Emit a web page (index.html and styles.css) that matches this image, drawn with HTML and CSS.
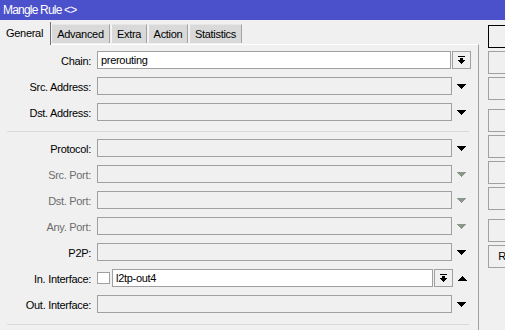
FILE: index.html
```html
<!DOCTYPE html>
<html>
<head>
<meta charset="utf-8">
<link rel="stylesheet" href="styles.css">
</head>
<body>
<div class="window">
  <div class="titlebar">Mangle Rule &lt;&gt;</div>
  <div class="content">
    <div class="main">
      <div class="tabs">
        <div class="tab active">General</div>
        <div class="tab t-adv">Advanced</div>
        <div class="tab t-extra">Extra</div>
        <div class="tab t-action">Action</div>
        <div class="tab t-stats">Statistics</div>
      </div>
      <div class="panel">
        <div class="row">
          <div class="label">Chain:</div>
          <div class="field white narrow">prerouting</div>
          <div class="ddbtn"><svg width="7" height="8" viewBox="0 0 7 8" shape-rendering="crispEdges"><rect x="0" y="0" width="7" height="1"/><rect x="2" y="2" width="3" height="2"/><rect x="0" y="4" width="7" height="1"/><rect x="1" y="5" width="5" height="1"/><rect x="2" y="6" width="3" height="1"/><rect x="3" y="7" width="1" height="1"/></svg></div>
        </div>
        <div class="row">
          <div class="label">Src. Address:</div>
          <div class="field"></div>
          <div class="arrow"><svg width="9" height="5" viewBox="0 0 9 5" shape-rendering="crispEdges"><rect x="0" y="0" width="9" height="1"/><rect x="1" y="1" width="7" height="1"/><rect x="2" y="2" width="5" height="1"/><rect x="3" y="3" width="3" height="1"/><rect x="4" y="4" width="1" height="1"/></svg></div>
        </div>
        <div class="row">
          <div class="label">Dst. Address:</div>
          <div class="field"></div>
          <div class="arrow"><svg width="9" height="5" viewBox="0 0 9 5" shape-rendering="crispEdges"><rect x="0" y="0" width="9" height="1"/><rect x="1" y="1" width="7" height="1"/><rect x="2" y="2" width="5" height="1"/><rect x="3" y="3" width="3" height="1"/><rect x="4" y="4" width="1" height="1"/></svg></div>
        </div>
        <div class="sep"></div>
        <div class="row">
          <div class="label">Protocol:</div>
          <div class="field"></div>
          <div class="arrow"><svg width="9" height="5" viewBox="0 0 9 5" shape-rendering="crispEdges"><rect x="0" y="0" width="9" height="1"/><rect x="1" y="1" width="7" height="1"/><rect x="2" y="2" width="5" height="1"/><rect x="3" y="3" width="3" height="1"/><rect x="4" y="4" width="1" height="1"/></svg></div>
        </div>
        <div class="row dim">
          <div class="label">Src. Port:</div>
          <div class="field"></div>
          <div class="arrow"><svg width="9" height="5" viewBox="0 0 9 5" shape-rendering="crispEdges"><rect x="0" y="0" width="9" height="1"/><rect x="1" y="1" width="7" height="1"/><rect x="2" y="2" width="5" height="1"/><rect x="3" y="3" width="3" height="1"/><rect x="4" y="4" width="1" height="1"/></svg></div>
        </div>
        <div class="row dim">
          <div class="label">Dst. Port:</div>
          <div class="field"></div>
          <div class="arrow"><svg width="9" height="5" viewBox="0 0 9 5" shape-rendering="crispEdges"><rect x="0" y="0" width="9" height="1"/><rect x="1" y="1" width="7" height="1"/><rect x="2" y="2" width="5" height="1"/><rect x="3" y="3" width="3" height="1"/><rect x="4" y="4" width="1" height="1"/></svg></div>
        </div>
        <div class="row dim">
          <div class="label">Any. Port:</div>
          <div class="field"></div>
          <div class="arrow"><svg width="9" height="5" viewBox="0 0 9 5" shape-rendering="crispEdges"><rect x="0" y="0" width="9" height="1"/><rect x="1" y="1" width="7" height="1"/><rect x="2" y="2" width="5" height="1"/><rect x="3" y="3" width="3" height="1"/><rect x="4" y="4" width="1" height="1"/></svg></div>
        </div>
        <div class="row">
          <div class="label">P2P:</div>
          <div class="field"></div>
          <div class="arrow"><svg width="9" height="5" viewBox="0 0 9 5" shape-rendering="crispEdges"><rect x="0" y="0" width="9" height="1"/><rect x="1" y="1" width="7" height="1"/><rect x="2" y="2" width="5" height="1"/><rect x="3" y="3" width="3" height="1"/><rect x="4" y="4" width="1" height="1"/></svg></div>
        </div>
        <div class="row">
          <div class="label">In. Interface:</div>
          <div class="check"></div>
          <div class="field white short">l2tp-out4</div>
          <div class="ddbtn"><svg width="7" height="8" viewBox="0 0 7 8" shape-rendering="crispEdges"><rect x="0" y="0" width="7" height="1"/><rect x="2" y="2" width="3" height="2"/><rect x="0" y="4" width="7" height="1"/><rect x="1" y="5" width="5" height="1"/><rect x="2" y="6" width="3" height="1"/><rect x="3" y="7" width="1" height="1"/></svg></div>
          <div class="arrow"><svg width="9" height="5" viewBox="0 0 9 5" shape-rendering="crispEdges"><rect x="4" y="0" width="1" height="1"/><rect x="3" y="1" width="3" height="1"/><rect x="2" y="2" width="5" height="1"/><rect x="1" y="3" width="7" height="1"/><rect x="0" y="4" width="9" height="1"/></svg></div>
        </div>
        <div class="row last">
          <div class="label">Out. Interface:</div>
          <div class="field"></div>
          <div class="arrow"><svg width="9" height="5" viewBox="0 0 9 5" shape-rendering="crispEdges"><rect x="0" y="0" width="9" height="1"/><rect x="1" y="1" width="7" height="1"/><rect x="2" y="2" width="5" height="1"/><rect x="3" y="3" width="3" height="1"/><rect x="4" y="4" width="1" height="1"/></svg></div>
        </div>
        <div class="sep bottom"></div>
      </div>
    </div>
    <div class="buttons">
      <div class="btn default">OK</div>
      <div class="btn">Cancel</div>
      <div class="btn">Apply</div>
      <div class="btn group">Disable</div>
      <div class="btn">Comment</div>
      <div class="btn">Copy</div>
      <div class="btn">Remove</div>
      <div class="btn group">Reset Counters</div>
      <div class="btn">Reset All Counters</div>
    </div>
  </div>
</div>
</body>
</html>
```

FILE: styles.css
```css
html, body {
  margin: 0;
  padding: 0;
  width: 505px;
  height: 330px;
  overflow: hidden;
  background: #f0f0f0;
}

body {
  font-family: "Liberation Sans", Arial, sans-serif;
  font-size: 11px;
  letter-spacing: -0.3px;
  color: #000;
}

.window {
  width: 505px;
  height: 330px;
  display: flex;
  flex-direction: column;
}

.titlebar {
  height: 20px;
  flex-shrink: 0;
  background: #4b50cb;
  color: #fff;
  font-size: 12px;
  letter-spacing: -0.8px;
  line-height: 21px;
  padding-left: 3px;
  box-sizing: border-box;
}

.content {
  display: flex;
  flex: 1;
  min-height: 0;
}

.main {
  width: 479px;
  flex-shrink: 0;
  display: flex;
  flex-direction: column;
}

.tabs {
  height: 24px;
  display: flex;
  align-items: flex-end;
  flex-shrink: 0;
  position: relative;
  z-index: 1;
}

.tab {
  height: 19px;
  box-sizing: border-box;
  background: #d9d9d9;
  border-top: 1px solid #e6e6e6;
  border-left: 1px solid #f4f4f4;
  border-right: 1px solid #a3a3a3;
  text-align: center;
  line-height: 18px;
  margin-left: 1px;
  margin-bottom: 1px;
}

.tab.active {
  width: 51px;
  height: 23px;
  margin: 0 0 -1px 0;
  background: #f0f0f0;
  border: none;
  border-right: 1px solid #707070;
  line-height: 22px;
  text-align: left;
  padding-left: 6px;
}

.tab.t-adv { width: 59px; margin-left: 0; }
.tab.t-extra { width: 36px; }
.tab.t-action { width: 40px; }
.tab.t-stats { width: 53px; }

.panel {
  flex: 1;
  border-top: 1px solid #ffffff;
  border-right: 1px solid #a0a0a0;
  box-sizing: border-box;
  padding-top: 6px;
  display: flex;
  flex-direction: column;
}

.row {
  display: flex;
  align-items: center;
  height: 18px;
  margin-bottom: 8px;
  flex-shrink: 0;
}

.label {
  width: 91px;
  margin-right: 6px;
  text-align: right;
  flex-shrink: 0;
  white-space: nowrap;
  padding-top: 1px;
}

.row.dim .label {
  color: #6d6d6d;
}

.field {
  width: 355px;
  height: 18px;
  box-sizing: border-box;
  border: 1px solid #a0a0a0;
  background: #f0f0f0;
  padding-left: 3px;
  line-height: 17px;
  flex-shrink: 0;
  white-space: nowrap;
  overflow: hidden;
}

.field.white {
  background: #fff;
}

.field.narrow {
  width: 354px;
}

.field.short {
  width: 321px;
}

.ddbtn {
  width: 19px;
  height: 18px;
  box-sizing: border-box;
  border: 1px solid #a0a0a0;
  background: #f0f0f0;
  margin-left: 1px;
  display: flex;
  align-items: center;
  justify-content: center;
  flex-shrink: 0;
}

.ddbtn svg {
  fill: #000;
}

.arrow {
  width: 18px;
  height: 18px;
  display: flex;
  align-items: center;
  justify-content: center;
  flex-shrink: 0;
}

.arrow svg {
  fill: #000;
}

.row.dim .arrow svg {
  fill: #8b968b;
}

.check {
  width: 13px;
  height: 12px;
  box-sizing: border-box;
  border: 1px solid #a0a0a0;
  background: #fff;
  margin-right: 2px;
  flex-shrink: 0;
}

.sep {
  height: 1px;
  width: 462px;
  margin: 2px 0 7px 7px;
  background: #d9d9d9;
  flex-shrink: 0;
}

.sep.bottom {
  margin-top: 3px;
}

.buttons {
  flex-shrink: 0;
  margin-left: 9px;
  padding-top: 5px;
  display: flex;
  flex-direction: column;
}

.btn {
  width: 106px;
  height: 23px;
  box-sizing: border-box;
  border: 1px solid #a0a0a0;
  background: #f0f0f0;
  margin-bottom: 3px;
  text-align: center;
  line-height: 21px;
  white-space: nowrap;
  flex-shrink: 0;
}

.btn.default {
  border-color: #000;
}

.btn.group {
  margin-top: 6px;
}
```
